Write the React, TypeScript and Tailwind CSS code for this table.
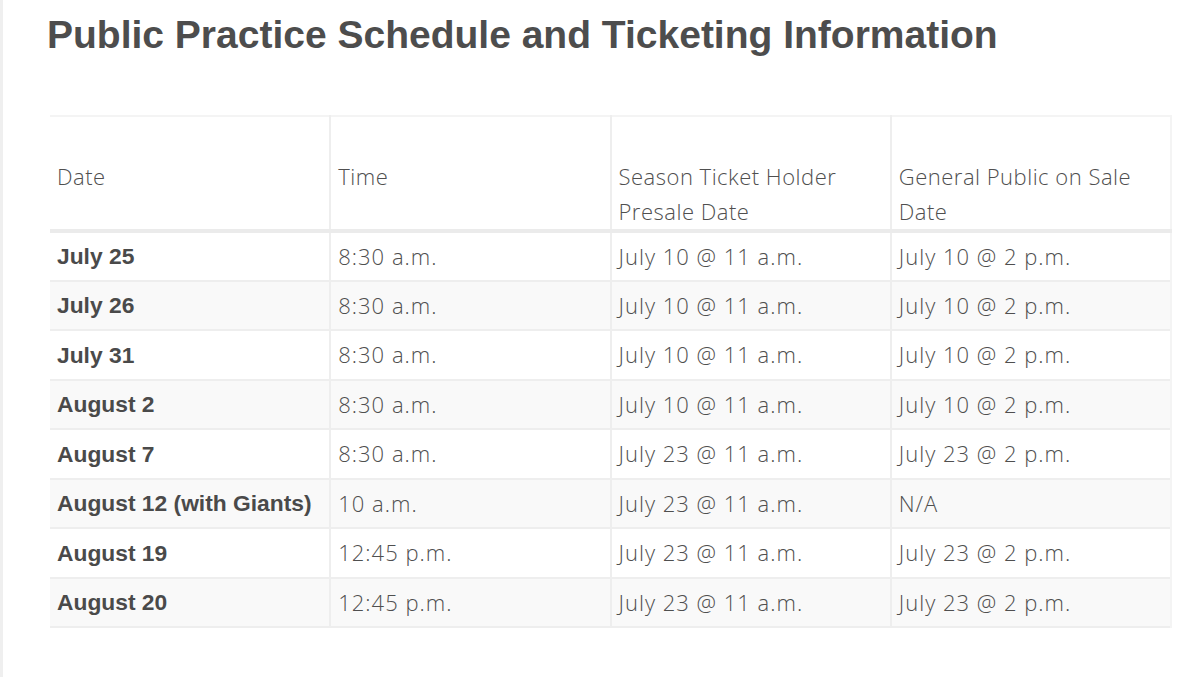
const rows = [
  { date: 'July 25', time: '8:30 a.m.', presale: 'July 10 @ 11 a.m.', publicSale: 'July 10 @ 2 p.m.' },
  { date: 'July 26', time: '8:30 a.m.', presale: 'July 10 @ 11 a.m.', publicSale: 'July 10 @ 2 p.m.' },
  { date: 'July 31', time: '8:30 a.m.', presale: 'July 10 @ 11 a.m.', publicSale: 'July 10 @ 2 p.m.' },
  { date: 'August 2', time: '8:30 a.m.', presale: 'July 10 @ 11 a.m.', publicSale: 'July 10 @ 2 p.m.' },
  { date: 'August 7', time: '8:30 a.m.', presale: 'July 23 @ 11 a.m.', publicSale: 'July 23 @ 2 p.m.' },
  { date: 'August 12 (with Giants)', time: '10 a.m.', presale: 'July 23 @ 11 a.m.', publicSale: 'N/A' },
  { date: 'August 19', time: '12:45 p.m.', presale: 'July 23 @ 11 a.m.', publicSale: 'July 23 @ 2 p.m.' },
  { date: 'August 20', time: '12:45 p.m.', presale: 'July 23 @ 11 a.m.', publicSale: 'July 23 @ 2 p.m.' },
]

const headers = ['Date', 'Time', 'Season Ticket Holder Presale Date', 'General Public on Sale Date']

export default function App() {
  return (
    <div className="w-[1200px] h-[677px] bg-white border-l-[3px] border-[#efefef] overflow-hidden">
      <div className="pl-[44px] pt-[12px]">
        {/* heading */}
        <h1 className="text-[39px] leading-[46px] font-bold text-[#4d4d4d] font-['Liberation_Sans',Arial,sans-serif]">
          Public Practice Schedule and Ticketing Information
        </h1>

        {/* schedule table */}
        <table className="mt-[57px] ml-[3px] w-[1122px] table-fixed border-collapse font-['Open_Sans',sans-serif] text-[22px] font-light text-[#4f4f4f]">
          <thead>
            <tr className="border-t-2 border-[#f4f4f4]">
              {headers.map((h, i) => (
                <th
                  key={h}
                  className={`text-left align-top font-light pt-[42px] pb-0 pl-[7px] pr-[8px] leading-[35px] tracking-[0.5px] border-b-4 border-[#ebebeb] ${i > 0 ? 'border-l-2 border-l-[#eeeeee]' : ''} ${i === 3 ? 'border-r-2 border-r-[#f4f4f4]' : ''}`}
                >
                  {h}
                </th>
              ))}
            </tr>
          </thead>
          <tbody>
            {rows.map((r, idx) => (
              <tr
                key={r.date}
                className={`h-[49.5px] border-b-2 border-[#eeeeee] ${idx % 2 === 1 ? 'bg-[#f9f9f9]' : 'bg-white'}`}
              >
                <td className="pl-[7px] pr-[8px] text-[22.8px] font-bold text-[#4a4a4a] font-['Liberation_Sans',Arial,sans-serif]">{r.date}</td>
                <td className="pl-[7px] pr-[8px] border-l-2 border-[#eeeeee] tracking-[1px]">{r.time}</td>
                <td className="pl-[7px] pr-[8px] border-l-2 border-[#eeeeee] tracking-[1px]">{r.presale}</td>
                <td className="pl-[7px] pr-[8px] border-l-2 border-r-2 border-l-[#eeeeee] border-r-[#f4f4f4] tracking-[1px]">{r.publicSale}</td>
              </tr>
            ))}
          </tbody>
        </table>
      </div>
    </div>
  )
}
